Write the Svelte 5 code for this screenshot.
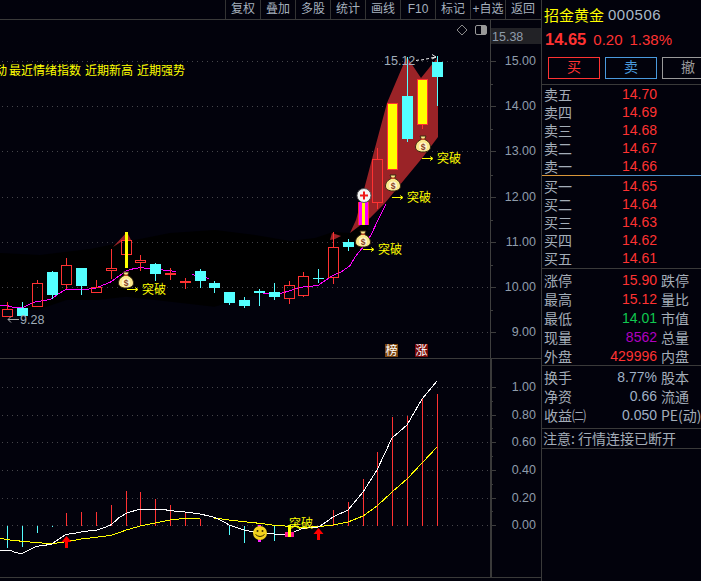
<script>
  const tools = ['复权','叠加','多股','统计','画线','F10','标记','+自选','返回'];
  const z = (v) => 200 + v / 3;
  const zx = (v) => v / 3;
  // x, wick high, wick low, body top, body bottom, kind (zoom-space values)
  const early = [
    [22,307,352,328,350,'h'],[67,307,348,324,347,'c'],[112,240,320,250,320,'h'],[155,213,298,217,285,'c'],
    [199,174,268,196,254,'h'],[244,205,284,205,260,'c'],[289,240,275,260,275,'h'],[334,148,237,205,212,'h'],
    [379,100,164,121,164,'h'],[421,166,212,181,188,'h'],[466,188,243,192,221,'c'],[511,205,240,219,225,'r'],
    [556,235,267,243,249,'r'],[601,207,263,213,243,'c'],[643,243,278,249,264,'c'],[688,276,315,276,309,'c'],
    [733,292,323,300,318,'c'],[778,267,317,272,279,'c'],[823,249,300,276,291,'c'],[868,243,311,256,296,'h'],
    [910,216,290,229,287,'h'],[955,207,250,233,236,'c'],[1000,97,252,142,233,'h'],[1045,117,152,126,141,'c']
  ].map(([x,a,b,c,d,k]) => [Math.round(zx(x)),z(a),z(b),z(c),z(d),k]);
  const late = [
    [377,148,209,159,202,'h'],[392,103,170,103,170,'y'],[407,57,142,96,139,'c'],[422,79,129,79,125,'y'],[437,56,106,62,77,'c']
  ];
  const candles = [...early, ...late];

  const pts = (a, fx, fy) => a.map(([x,y]) => `${fx(x).toFixed(1)},${fy(y).toFixed(1)}`).join(' ');
  const m1 = pts([[0,316],[22,317],[45,323],[67,323],[90,312],[112,304],[135,302],[155,296],[178,280],[199,268],[222,268],[244,268],[267,267],[289,264],[312,254],[334,245],[357,228],[379,212],[401,206],[421,203],[444,205],[466,205],[488,210],[511,212],[527,215]], zx, z);
  const m2 = pts([[577,224],[601,228],[628,236]], zx, z);
  const m3 = pts([[790,280],[823,282],[845,279],[868,273],[890,265],[910,261],[933,259],[955,256],[978,240],[1000,226],[1023,216],[1050,197]], zx, z) + ' 355,257 364,246 371,235 378,220 386,204';
  const blackBand = '0,253 40,255 90,249 130,241 170,233 215,230 255,235 290,241 315,238 333,232 350,233 372,218 360,248 348,266 ' +
    pts([[1000,226],[955,256],[868,273],[790,280],[643,320],[466,300],[379,290],[289,300],[199,300],[112,330],[0,330]], zx, z);
  const redZone = '350,233 356,220 372,159 387,103 404,63 407,57 421,78 438,57 438,137 423,157 385,203 370,218';

  const wy = (v) => 440 + v / 3;
  const white = pts([[0,330],[30,331],[45,337],[65,341],[90,328],[110,319],[135,316],[155,312],[178,296],[199,283],[222,280],[255,274],[289,271],[312,263],[334,254],[357,233],[379,220],[410,210],[466,208],[488,208],[511,212],[556,216],[601,222],[643,232],[665,242],[688,255],[733,270],[778,280],[823,282],[868,282],[890,272],[910,265],[955,261]], zx, wy) + ' 326,522 333,517 348,510 363,492 377,470 392,438 407,425 422,399 437,381';
  const yellow = pts([[0,295],[30,300],[67,304],[112,308],[155,311],[199,305],[244,297],[289,292],[334,286],[379,270],[421,258],[466,249],[511,240],[556,235],[601,234],[643,234],[688,240],[733,245],[778,250],[823,256],[868,259],[910,262],[955,260]], zx, wy) + ' 333,525 348,522 363,516 377,506 392,492 407,479 422,463 437,447';
  const cyanBars = [[22,323],[67,320],[112,278],[155,260],[688,284],[733,308],[823,302]];
  const redBars = [[199,220],[244,217],[289,217],[334,196],[379,154],[421,157],[466,178],[511,196],[556,220],[601,236],[1000,211],[1045,187]];
  const redBarsLate = [[333,510],[348,502],[363,479],[377,452],[392,417],[407,416],[422,398],[437,394]];

  const mainGrid = [61,106,151,197,242,287,332];
  const mainLabels = [[61,'15.00'],[106,'14.00'],[151,'13.00'],[197,'12.00'],[242,'11.00'],[287,'10.00'],[332,'9.00']];
  const mainMinor = [84,129,175,220,265,310];
  const subLabels = [[387,'1.00'],[415,'0.80'],[442,'0.60'],[470,'0.40'],[498,'0.20'],[525,'0.00']];
  const subMinor = [401,428,456,484,511];
  const bags = [[126,280],[363,239],[393,183],[423,144]];
  const breaks = [[127,289],[363,249],[392,197],[422,158]];

  const sell = [['卖五','14.70'],['卖四','14.69'],['卖三','14.68'],['卖二','14.67'],['卖一','14.66']];
  const buy = [['买一','14.65'],['买二','14.64'],['买三','14.63'],['买四','14.62'],['买五','14.61']];
  const stats = [
    ['涨停','15.90','up','跌停'],['最高','15.12','up','量比'],['最低','14.01','down','市值'],
    ['现量','8562','vol','总量'],['外盘','429996','up','内盘']
  ];
  const fund = [['换手','8.77%','股本'],['净资','0.66','流通'],['收益㈡','0.050','PE(动)']];
</script>

<div class="screen">
  <div class="left">
    <div class="toolbar">
      {#each tools as t}<span class="tool">{t}</span>{/each}
    </div>

    <div class="pane main-pane">
      <svg width="541" height="338" viewBox="0 20 541 338">
        <polygon points={blackBand} fill="#000" />
        {#each mainGrid as y}
          <line class="grid" x1="2" x2="490" y1={y + .5} y2={y + .5} />
          <line class="tick" x1="490" x2="496" y1={y + .5} y2={y + .5} />
        {/each}
        {#each mainMinor as y}<line class="tick" x1="490" x2="493" y1={y + .5} y2={y + .5} />{/each}
        <line class="axis" x1="490.5" x2="490.5" y1="20" y2="358" />

        <polygon points={redZone} fill="#9a2327" />
        <polygon points="113,247 127,232 131,240 124,240" fill="#9a2327" />
        <polygon points="330,240 332,233 341,236 335,239" fill="#9a2327" />

        <polyline class="ma" points={m1} />
        <polyline class="ma" points={m2} />
        <polyline class="ma" points={m3} />

        {#each candles as [x,hi,lo,top,bot,k]}
          {#if k === 'h'}
            <line class="wick red" x1={x + .5} x2={x + .5} y1={hi} y2={top} />
            <line class="wick red" x1={x + .5} x2={x + .5} y1={bot} y2={lo} />
            <rect class="hollow" x={x - 4.5} y={Math.round(top) + .5} width="10" height={Math.max(1, Math.round(bot - top))} />
          {:else if k === 'r'}
            <line class="wick red" x1={x + .5} x2={x + .5} y1={hi} y2={lo} />
            <rect x={x - 5} y={Math.round(top)} width="11" height="2" fill="#ff3232" />
          {:else if k === 'y'}
            <line class="wick red" x1={x + .5} x2={x + .5} y1={hi} y2={lo} />
            <rect x={x - 4.5} y={top + .5} width="10" height={bot - top - 1} fill="#ffff00" stroke="#ff3232" stroke-width="1" shape-rendering="crispEdges" />
          {:else}
            <line class="wick cyan" x1={x + .5} x2={x + .5} y1={hi} y2={lo} />
            <rect x={x - 5} y={Math.round(top)} width="11" height={Math.max(1, Math.round(bot - top))} fill="#54ffff" />
          {/if}
        {/each}

        <rect x="125" y="232" width="3" height="36" fill="#ffff00" />

        <rect x="358" y="202" width="11" height="23" fill="#ff3232" />
        <rect x="359" y="202" width="9" height="23" fill="#ff00ff" />
        <rect x="362" y="202" width="3" height="23" fill="#ffff00" />
        <circle cx="364" cy="195.5" r="7" fill="#f4f4f4" stroke="#555" />
        <path d="M360 195.5h8M364 191.5v8" stroke="#f01818" stroke-width="2" />

        {#each bags as [x,y]}
          <g transform="translate({x} {y})">
            <path d="M-3 -8 L3 -8 L1.5 -4.5 C5 -3.5 7.5 0 7.5 3 C7.5 6.5 4 8 0 8 C-4 8 -7.5 6.5 -7.5 3 C-7.5 0 -5 -3.5 -1.5 -4.5 Z" fill="#fbe88c" stroke="#3a2a10" />
            <rect x="-2" y="-5.5" width="4" height="1.4" fill="#b04020" />
            <circle cx="0" cy="2.5" r="4" fill="#fff6cc" />
            <text class="dollar" x="0" y="5.7">$</text>
          </g>
        {/each}

        {#each breaks as [x,y]}
          <line x1={x} x2={x + 10} y1={y + .5} y2={y + .5} stroke="#ffff00" />
          <path d="M{x + 8} {y - 1.5}l3 2l-3 2" fill="none" stroke="#ffff00" />
          <text class="sig" x={x + 15} y={y + 5}>突破</text>
        {/each}

        <text class="sig" x="-5" y="74.5">动</text>
        <text class="sig" x="9" y="74.5">最近情绪指数</text>
        <text class="sig" x="85" y="74.5">近期新高</text>
        <text class="sig" x="137" y="74.5">近期强势</text>

        <text class="mark" x="384" y="65">15.12</text>
        <path d="M416 60.5l3 -.5M421 60l3 -.5M426 59l3 -.5M431 58l5 -1M432 54.5l4 2.5l-4 2" fill="none" stroke="#e8e8e8" />
        <path d="M19 319.5H8M11 316.5l-3 3l3 3" fill="none" stroke="#a8a8a8" />
        <text class="mark" x="20" y="324">9.28</text>

        <path d="M462 25l5 5l-5 5l-5 -5z" fill="none" stroke="#8a8a8a" />
        <rect x="475.5" y="25.5" width="11" height="9" rx="1.5" fill="none" stroke="#999" />
        <rect x="481" y="26" width="5" height="8" fill="#999" />

        <rect x="491" y="28" width="50" height="16" fill="#222226" />
        <text class="axis-text" x="492" y="41">15.38</text>

        {#each mainLabels as [y,t]}<text class="axis-text end" x="536" y={y + 4}>{t}</text>{/each}

        <rect x="385" y="344" width="13" height="13" fill="#7a4510" />
        <text class="badge" x="391.5" y="355">榜</text>
        <rect x="415" y="344" width="13" height="13" fill="#760808" />
        <text class="badge" x="421.5" y="355">涨</text>
      </svg>
    </div>

    <div class="pane sub-pane">
      <svg width="541" height="218" viewBox="0 359 541 218">
        {#each subLabels as [y,t]}
          <line class="grid" x1="2" x2="490" y1={y + .5} y2={y + .5} />
          <line class="tick" x1="490" x2="496" y1={y + .5} y2={y + .5} />
          <text class="axis-text end" x="536" y={y + 4}>{t}</text>
        {/each}
        {#each subMinor as y}<line class="tick" x1="490" x2="493" y1={y + .5} y2={y + .5} />{/each}
        <rect x="490" y="359" width="2" height="218" fill="#3a3a3a" />

        {#each cyanBars as [x,b]}<line class="wick cyan" x1={Math.round(zx(x)) + .5} x2={Math.round(zx(x)) + .5} y1="525.5" y2={wy(b)} />{/each}
        {#each redBars as [x,t]}<line class="wick red" x1={Math.round(zx(x)) + .5} x2={Math.round(zx(x)) + .5} y1={wy(t)} y2="526" />{/each}
        {#each redBarsLate as [x,t]}<line class="wick red" x1={x + .5} x2={x + .5} y1={t} y2="526" />{/each}

        <polyline class="curve yellow" points={yellow} />
        <polyline class="curve white" points={white} />

        <rect x="285" y="532" width="9" height="5" fill="#ff1493" />
        <rect x="288" y="525" width="3" height="12" fill="#ffff00" />
        <text class="sig" x="289" y="528">突破</text>

        <rect x="258" y="525" width="3" height="17" fill="#ff20ff" />
        <circle cx="260" cy="533" r="7" fill="#f2d21c" />
        <circle cx="257.5" cy="531" r="1" fill="#3a2a00" />
        <circle cx="262.5" cy="531" r="1" fill="#3a2a00" />
        <path d="M255.5 534.5q4.5 4 9 0" fill="none" stroke="#3a2a00" />

        <path d="M66.5 536l-5 6h3.5v6h3v-6h3.5z" fill="#ff0000" />
        <path d="M318.5 528l-5 6h3.5v6h3v-6h3.5z" fill="#ff0000" />
      </svg>
    </div>
  </div>

  <aside class="panel">
    <div class="title"><span class="name">招金黄金</span><span class="code">000506</span></div>
    <div class="quote"><b>14.65</b><span>0.20</span><span>1.38%</span></div>
    <div class="actions">
      <span class="act buy">买</span><span class="act sale">卖</span><span class="act cancel">撤</span>
    </div>
    <div class="book">
      {#each sell as [l,v]}<div class="row"><span class="lab">{l}</span><span class="val up">{v}</span></div>{/each}
    </div>
    <div class="split"></div>
    <div class="book buyside">
      {#each buy as [l,v]}<div class="row"><span class="lab">{l}</span><span class="val up">{v}</span></div>{/each}
    </div>
    <div class="stats">
      {#each stats as [l,v,c,r]}<div class="row tall"><span class="lab">{l}</span><span class="val {c}">{v}</span><span class="lab">{r}</span></div>{/each}
    </div>
    <div class="stats fund">
      {#each fund as [l,v,r]}<div class="row tall"><span class="lab">{l}</span><span class="val">{v}</span><span class="lab">{r}</span></div>{/each}
    </div>
    <div class="notice">注意: 行情连接已断开</div>
  </aside>
</div>

<style>
  :global(body) { margin: 0; background: #02020c; }
  .screen {
    width: 701px; height: 581px; display: flex; overflow: hidden; background: #02020c;
    font-family: "Liberation Sans", "Noto Sans CJK SC", sans-serif; color: #a4adb8;
  }
  .left { width: 541px; flex: none; height: 581px; border-right: 1px solid #3a3a3a; }
  .toolbar {
    height: 19px; border-bottom: 1px solid #3a3a3a; display: flex; justify-content: flex-end; padding-right: 1px;
  }
  .tool {
    width: 34px; border-left: 1px solid #333; font-size: 12px; line-height: 18px; text-align: center; color: #a5b0bd; white-space: nowrap;
  }
  .pane svg { display: block; }
  .main-pane { border-bottom: 1px solid #3a3a3a; }
  .sub-pane { border-bottom: 1px solid #3a3a3a; }
  .grid { stroke: #45454a; stroke-width: 1; stroke-dasharray: 1 4; shape-rendering: crispEdges; }
  .tick, .axis { stroke: #3e3e3e; stroke-width: 1; shape-rendering: crispEdges; }
  .ma { fill: none; stroke: #ff00ff; stroke-width: 1; shape-rendering: crispEdges; }
  .curve { fill: none; stroke-width: 1; shape-rendering: crispEdges; }
  .curve.white { stroke: #ffffff; }
  .curve.yellow { stroke: #ffff00; }
  .wick { stroke-width: 1; shape-rendering: crispEdges; }
  .wick.red { stroke: #ff3232; }
  .wick.cyan { stroke: #54ffff; }
  .hollow { fill: none; stroke: #ff3232; stroke-width: 1; shape-rendering: crispEdges; }
  .sig { font-size: 12px; fill: #ffff00; font-family: "Noto Sans CJK SC", sans-serif; }
  .mark { font-size: 12.5px; fill: #a0adba; }
  .axis-text { font-size: 12.5px; fill: #8f9cab; }
  .end { text-anchor: end; }
  .dollar { font-size: 8.5px; font-weight: 700; fill: #8a4020; text-anchor: middle; }
  .badge { font-size: 12px; fill: #fff; text-anchor: middle; font-family: "Noto Sans CJK SC", sans-serif; }

  .panel { flex: 1; min-width: 0; overflow: hidden; }
  .title { height: 28px; padding-left: 2px; display: flex; align-items: center; gap: 4px; white-space: nowrap; }
  .name { color: #ffff00; font-size: 15px; font-family: "Noto Sans CJK SC", sans-serif; }
  .code { color: #a8b8c8; font-size: 15px; letter-spacing: .5px; }
  .quote { height: 22px; padding-left: 3px; display: flex; align-items: center; gap: 7px; color: #ff3232; font-size: 15px; white-space: nowrap; }
  .quote b { font-size: 16.5px; }
  .actions { height: 35px; padding: 7px 0 0 6px; box-sizing: border-box; display: flex; gap: 5px; border-bottom: 1px solid #3a3a3a; }
  .act { flex: none; width: 50px; height: 20px; border: 1px solid; font-size: 14px; line-height: 19px; text-align: center; }
  .act.buy { color: #ff3232; border-color: #ff3232; }
  .act.sale { color: #4a9ade; border-color: #4a9ade; }
  .act.cancel { color: #9a9a9a; border-color: #9a9a9a; }
  .split { height: 1px; margin: 0 0 1px 0; background: linear-gradient(90deg, #d8963a 0 48px, #4a8ec8 48px); }
  .book .row { height: 18px; }
  .buyside { border-bottom: 1px solid #3a3a3a; height: 91px; }
  .row { display: grid; grid-template-columns: 44px 69px 1fr; padding-left: 2px; align-items: center; font-size: 14px; white-space: nowrap; }
  .row.tall { height: 19px; }
  .lab { color: #a4adb8; font-family: "Noto Sans CJK SC", sans-serif; line-height: 18px; }
  .row .lab:nth-child(3) { padding-left: 4px; }
  .val { text-align: right; color: #9fb0c4; }
  .up { color: #ff3232; }
  .down { color: #10c850; }
  .vol { color: #b000c0; }
  .stats { border-bottom: 1px solid #3a3a3a; padding-top: 1px; height: 95px; }
  .fund { height: 61px; }
  .notice { height: 19px; border-bottom: 1px solid #3a3a3a; padding-left: 1px; font-size: 14px; line-height: 19px; color: #a4adb8; font-family: "Noto Sans CJK SC", sans-serif; white-space: nowrap; }
</style>
